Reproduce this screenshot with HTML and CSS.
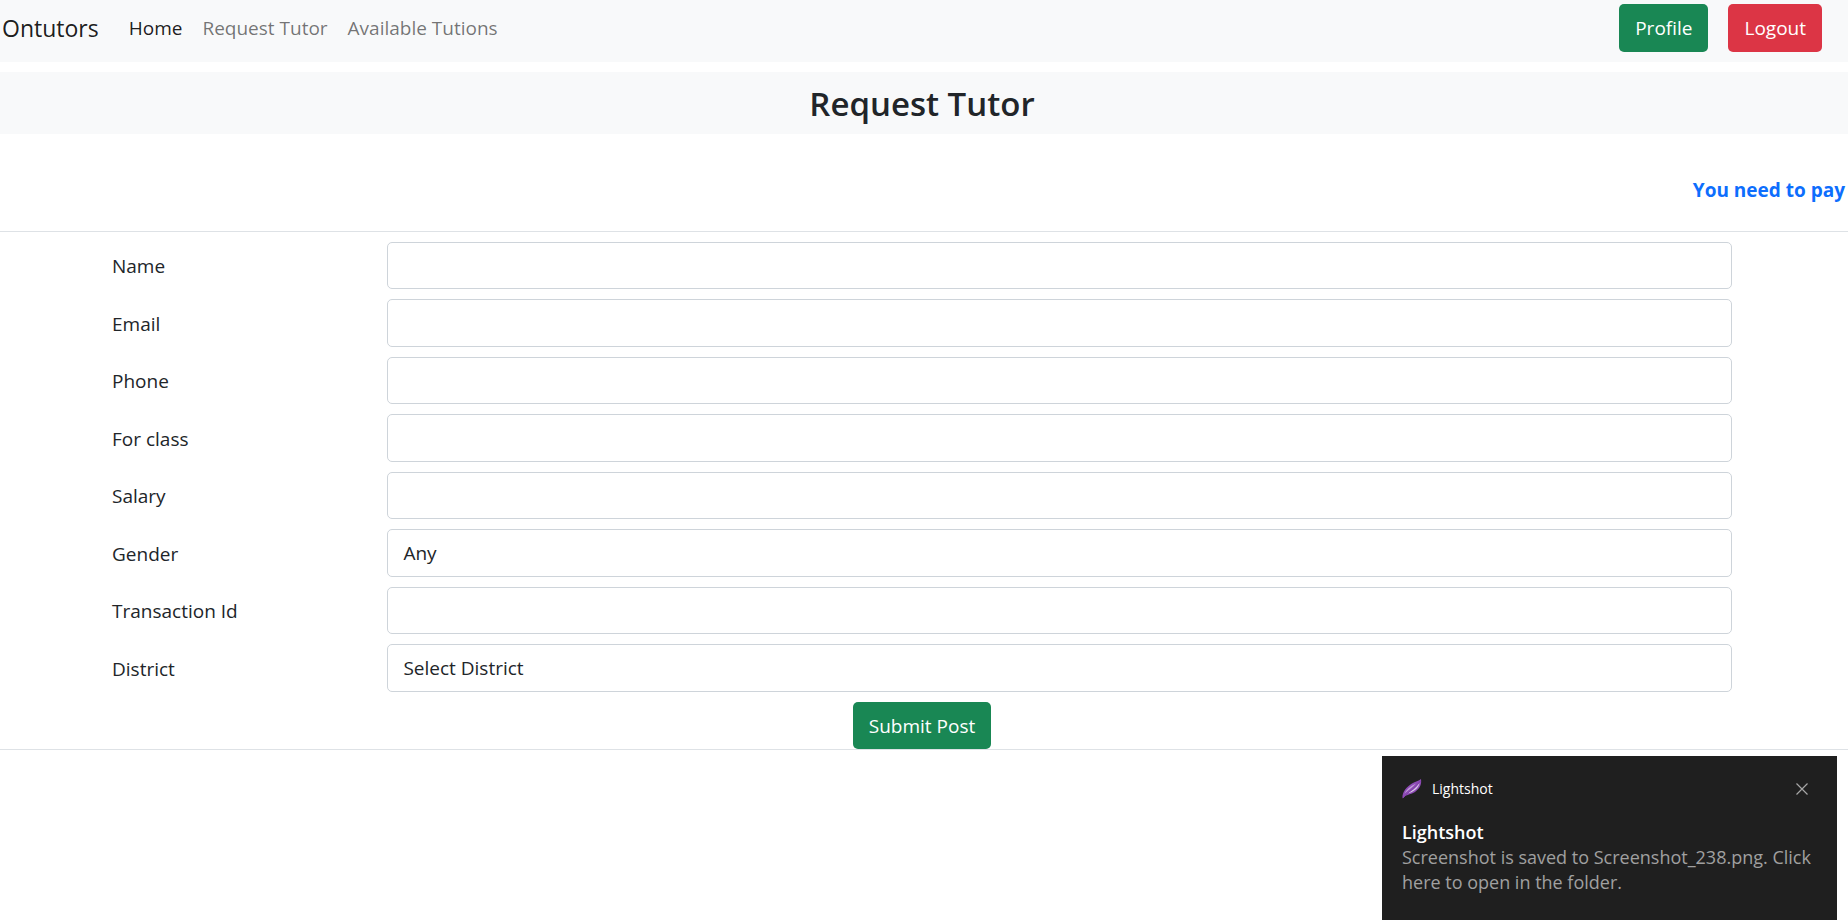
FILE: index.html
```html
<!DOCTYPE html>
<html lang="en">
<head>
<meta charset="utf-8">
<title>Ontutors - Request Tutor</title>
<link rel="stylesheet" href="styles.css">
</head>
<body>
<nav class="navbar">
  <a class="brand" href="#">Ontutors</a>
  <div class="nav-links">
    <a class="nav-link active" href="#">Home</a>
    <a class="nav-link" href="#">Request Tutor</a>
    <a class="nav-link" href="#">Available Tutions</a>
  </div>
  <div class="nav-actions">
    <button class="btn btn-success" type="button">Profile</button>
    <button class="btn btn-danger" type="button">Logout</button>
  </div>
</nav>
<main>
  <h1 class="page-title">Request Tutor</h1>
  <p class="notice">You need to pay</p>
  <div class="form-section">
    <form class="tutor-form">
      <label for="name">Name</label><input class="control" id="name" type="text">
      <label for="email">Email</label><input class="control" id="email" type="email">
      <label for="phone">Phone</label><input class="control" id="phone" type="tel">
      <label for="class">For class</label><input class="control" id="class" type="text">
      <label for="salary">Salary</label><input class="control" id="salary" type="text">
      <label for="gender">Gender</label>
      <select class="control" id="gender"><option>Any</option></select>
      <label for="transaction">Transaction Id</label><input class="control" id="transaction" type="text">
      <label for="district">District</label>
      <select class="control" id="district"><option>Select District</option></select>
      <button class="btn btn-success submit" type="submit">Submit Post</button>
    </form>
  </div>
</main>
<aside class="toast">
  <div class="toast-header">
    <svg class="feather" viewBox="0 0 20 20" aria-hidden="true">
      <path d="M.5 19.500C0 12 5 8 10 4.500C13 2.500 17 2 19 0C20 6 17 10 13 13C8 16 3 15.500 .5 19.500Z" fill="#8d4bb5"/>
      <path d="M2.500 14.500C4 11 8 7.500 14 4.500C10 9 6 11.500 2.500 14.500Z" fill="#c3a0d8"/>
      <path d="M5 14.500C10 12 14 9 17.500 4C17 9 11 13.500 5 14.500Z" fill="#d9c8e6"/>
      <path d="M1 19C6 13 13 9 18.500 2" fill="none" stroke="#8040a8" stroke-width="1"/>
    </svg>
    <span class="toast-app">Lightshot</span>
    <button class="toast-close" type="button" aria-label="Close">
      <svg viewBox="0 0 12 12" width="12" height="12"><path d="M.5.5l11 11M11.500.5l-11 11" fill="none" stroke="#a6a6a6" stroke-width="1.200"/></svg>
    </button>
  </div>
  <strong class="toast-title">Lightshot</strong>
  <p class="toast-text">Screenshot is saved to Screenshot_238.png. Click here to open in the folder.</p>
</aside>
</body>
</html>
```
FILE: styles.css
```css
* { box-sizing: border-box; }
body {
  margin: 0;
  background: #fff;
  color: #212529;
  font-family: "Open Sans", "Noto Sans", sans-serif;
  font-size: 19px;
  line-height: 1.5;
}
.navbar {
  display: flex;
  align-items: center;
  padding: 4px 26px 10px 2px;
  background: #f8f9fa;
}
.navbar a { text-decoration: none; }
.brand { margin-right: 30px; color: rgba(0, 0, 0, .9); font-size: 23px; line-height: 30px; }
.nav-links { display: flex; gap: 20px; }
.nav-link { color: rgba(0, 0, 0, .55); }
.nav-link.active { color: rgba(0, 0, 0, .9); }
.nav-actions { display: flex; gap: 20px; margin-left: auto; }
.btn {
  padding: 9px 15px 8px;
  border: 1px solid transparent;
  border-radius: 5px;
  color: #fff;
  font: inherit;
}
.btn-success { background: #198754; }
.btn-danger { background: #dc3545; }
main { padding-top: 10px; }
.page-title {
  margin: 0;
  padding: 8px 4px 6px 0;
  background: #f8f9fa;
  font-size: 33px;
  font-weight: 600;
  line-height: 48px;
  text-align: center;
}
.notice {
  margin: 41px 3px 26px;
  color: #0d6efd;
  font-weight: 700;
  line-height: 30px;
  text-align: right;
}
.form-section {
  padding: 10px 4px 0 0;
  border-top: 1px solid #dee2e6;
  border-bottom: 1px solid #dee2e6;
}
.tutor-form {
  display: grid;
  grid-template-columns: 17% 1fr;
  align-items: center;
  row-gap: 10px;
  max-width: 1620px;
  margin: 0 auto;
}
.tutor-form label { padding-top: 2px; }
.control {
  width: 100%;
  padding: 9px 15px 8px;
  border: 1px solid #ced4da;
  border-radius: 5px;
  background: #fff;
  color: #212529;
  font: inherit;
  appearance: none;
}
.submit { grid-column: 1 / -1; justify-self: center; }
.toast {
  position: fixed;
  right: 11px;
  bottom: 0;
  width: 455px;
  padding: 21px 20px 25px;
  background: #1f1f1f;
  color: #fff;
}
.toast-header { display: flex; align-items: center; gap: 10px; margin-bottom: 18px; }
.feather { width: 20px; height: 20px; }
.toast-app { font-size: 14px; line-height: 24px; }
.toast-close {
  display: flex;
  margin-left: auto;
  margin-right: 9px;
  padding: 0;
  border: 0;
  background: none;
}
.toast-title { display: block; font-size: 18px; font-weight: 600; line-height: 26px; }
.toast-text { margin: 0; color: #a0a0a0; font-size: 18px; line-height: 25px; }
```
